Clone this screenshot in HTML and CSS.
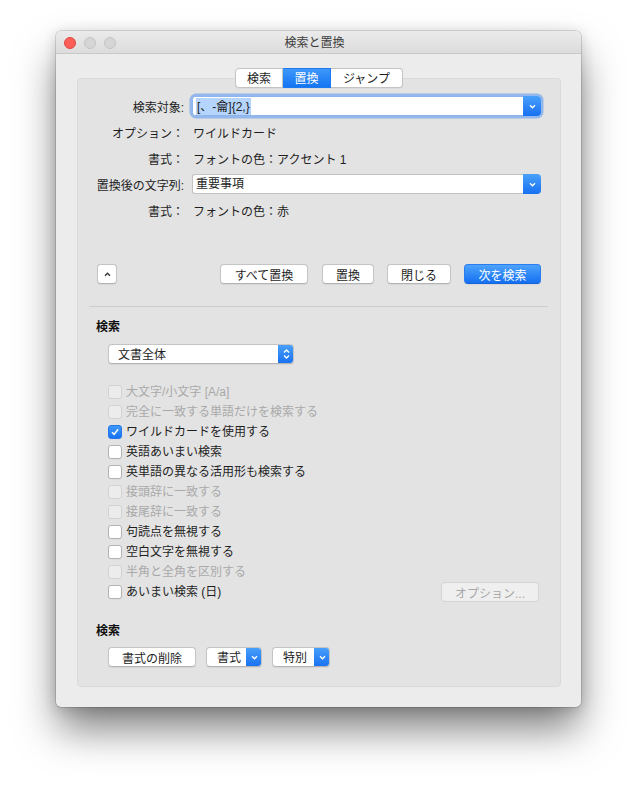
FILE: index.html
```html
<!DOCTYPE html>
<html lang="ja">
<head>
<meta charset="utf-8">
<title>検索と置換</title>
<link rel="stylesheet" href="styles.css">
</head>
<body>
<div class="window">
  <div class="titlebar">
    <div class="lights">
      <span class="light red"></span><span class="light grey"></span><span class="light grey"></span>
    </div>
    <div class="title">検索と置換</div>
  </div>
  <div class="content">
    <div class="tabs">
      <span class="tab">検索</span><span class="tab active">置換</span><span class="tab">ジャンプ</span>
    </div>
    <div class="group">
      <div class="form">
        <span class="lbl">検索対象:</span>
        <div class="combo focus">
          <div class="combo-field"><span class="selection">[、-龠]{2,}</span></div>
          <div class="combo-btn"><svg width="9" height="9" viewBox="0 0 9 9"><path d="M2 3.2 L4.5 5.7 L7 3.2" fill="none" stroke="#fff" stroke-width="1.4"/></svg></div>
        </div>
        <span class="lbl">オプション：</span><span class="val">ワイルドカード</span>
        <span class="lbl">書式：</span><span class="val">フォントの色：アクセント 1</span>
        <span class="lbl">置換後の文字列:</span>
        <div class="combo">
          <div class="combo-field">重要事項</div>
          <div class="combo-btn"><svg width="9" height="9" viewBox="0 0 9 9"><path d="M2 3.2 L4.5 5.7 L7 3.2" fill="none" stroke="#fff" stroke-width="1.4"/></svg></div>
        </div>
        <span class="lbl">書式：</span><span class="val">フォントの色：赤</span>
      </div>

      <div class="actions">
        <button class="btn small"><svg width="9" height="9" viewBox="0 0 9 9"><path d="M2 5.8 L4.5 3.3 L7 5.8" fill="none" stroke="#333" stroke-width="1.4"/></svg></button>
        <div class="action-buttons">
          <button class="btn w-all">すべて置換</button>
          <button class="btn w-rep">置換</button>
          <button class="btn w-close">閉じる</button>
          <button class="btn primary w-next">次を検索</button>
        </div>
      </div>

      <div class="separator"></div>

      <div class="section-title">検索</div>
      <div class="popup scope">
        <span class="popup-text">文書全体</span>
        <span class="stepper"><svg width="9" height="14" viewBox="0 0 9 14"><path d="M2 5.5 L4.5 3 L7 5.5 M2 8.5 L4.5 11 L7 8.5" fill="none" stroke="#fff" stroke-width="1.3"/></svg></span>
      </div>

      <ul class="checks">
        <li class="disabled"><span class="cb"></span>大文字/小文字 [A/a]</li>
        <li class="disabled"><span class="cb"></span>完全に一致する単語だけを検索する</li>
        <li><span class="cb checked"><svg width="14" height="14" viewBox="0 0 14 14"><path d="M3.5 7.2 L6 9.8 L10.6 3.8" fill="none" stroke="#fff" stroke-width="1.8"/></svg></span>ワイルドカードを使用する</li>
        <li><span class="cb"></span>英語あいまい検索</li>
        <li><span class="cb"></span>英単語の異なる活用形も検索する</li>
        <li class="disabled"><span class="cb"></span>接頭辞に一致する</li>
        <li class="disabled"><span class="cb"></span>接尾辞に一致する</li>
        <li><span class="cb"></span>句読点を無視する</li>
        <li><span class="cb"></span>空白文字を無視する</li>
        <li class="disabled"><span class="cb"></span>半角と全角を区別する</li>
        <li class="last"><span class="check-label"><span class="cb"></span>あいまい検索 (日)</span><button class="btn disabled-btn">オプション...</button></li>
      </ul>

      <div class="section-title second">検索</div>
      <div class="bottom-buttons">
        <button class="btn w-clear">書式の削除</button>
        <div class="popup blue-end w-fmt"><span class="popup-text">書式</span><span class="popup-arrow"><svg width="9" height="9" viewBox="0 0 9 9"><path d="M2 3.2 L4.5 5.7 L7 3.2" fill="none" stroke="#fff" stroke-width="1.4"/></svg></span></div>
        <div class="popup blue-end w-special"><span class="popup-text">特別</span><span class="popup-arrow"><svg width="9" height="9" viewBox="0 0 9 9"><path d="M2 3.2 L4.5 5.7 L7 3.2" fill="none" stroke="#fff" stroke-width="1.4"/></svg></span></div>
      </div>
    </div>
  </div>
</div>
</body>
</html>
```

FILE: styles.css
```css
* { box-sizing: border-box; }

html {
  height: 100%;
  margin: 0;
  background: #ffffff;
}

body {
  margin: 0;
  min-height: 100%;
  padding: 31px 0 0 56px;
  background: #ffffff;
  font-family: "Liberation Sans", "Noto Sans CJK JP", sans-serif;
  font-size: 12px;
  color: #1e1e1e;
}

.window {
  width: 525px;
  height: 676px;
  background: #ececec;
  border-radius: 5px;
  box-shadow: 0 0 0 0.5px rgba(0, 0, 0, 0.25), 0 2px 14px rgba(0, 0, 0, 0.16), 0 24px 40px -2px rgba(0, 0, 0, 0.5);
  overflow: hidden;
}

.titlebar {
  height: 23px;
  background: linear-gradient(#ebebeb, #dcdcdc);
  border-bottom: 1px solid #c9c9c9;
  display: flex;
  align-items: center;
}

.lights {
  display: flex;
  gap: 8px;
  padding-left: 8px;
  padding-top: 2px;
}

.light {
  width: 12px;
  height: 12px;
  border-radius: 50%;
  display: block;
}

.light.red {
  background: #fc5f57;
  border: 0.5px solid #df4744;
}

.light.grey {
  background: #d6d6d6;
  border: 0.5px solid #c3c3c3;
}

.title {
  flex: 1;
  text-align: center;
  margin-left: -68px;
  padding-top: 2px;
  color: #3d3d3d;
  font-size: 12px;
  line-height: 16px;
}

.content {
  padding: 14px 20px 20px 21px;
}

.tabs {
  display: flex;
  justify-content: center;
  position: relative;
  z-index: 1;
  height: 20px;
}

.tab {
  height: 20px;
  line-height: 16px;
  padding-top: 2px;
  background: #fff;
  border: 1px solid #c3c3c3;
  border-left: none;
  font-size: 12px;
  color: #1e1e1e;
  text-align: center;
  box-shadow: 0 0.5px 0 rgba(0, 0, 0, 0.08);
}

.tab:first-child {
  border-left: 1px solid #c3c3c3;
  border-radius: 4px 0 0 4px;
  width: 48px;
}

.tab.active {
  background: linear-gradient(#3f98fb, #1474f2);
  color: #fff;
  border-color: #1e78ef;
  width: 48px;
}

.tab:last-child {
  border-radius: 0 4px 4px 0;
  width: 72px;
}

.group {
  margin-top: -10px;
  background: #e3e3e3;
  border: 1px solid #dadada;
  border-radius: 4px;
  padding: 14px 0 19px 0;
}

.form {
  display: grid;
  grid-template-columns: 106px 1fr;
  column-gap: 8px;
  grid-auto-rows: 26px;
  align-items: center;
  padding-right: 19px;
}

.lbl, .val {
  line-height: 16px;
  padding-top: 4px;
  white-space: nowrap;
}

.lbl {
  text-align: right;
}

.val {
  padding-left: 1px;
}

.combo {
  display: flex;
  height: 20px;
  border-radius: 4px;
}

.combo.focus {
  box-shadow: 0 0 0 2.5px rgba(95, 155, 240, 0.6);
}

.combo-field {
  flex: 1;
  background: #fff;
  border: 1px solid #c2c2c2;
  border-right: none;
  border-radius: 3px 0 0 3px;
  padding: 1px 3px 0 3px;
  line-height: 17px;
  white-space: nowrap;
}

.combo.focus .combo-field {
  border-color: #8fb4ea;
  padding-top: 0;
}

.selection {
  background: #b5d5fc;
  display: inline-block;
  line-height: 16px;
  padding: 1px 1px 0 1px;
  margin-top: 1px;
}

.combo-btn {
  width: 18px;
  background: linear-gradient(#4aa1fb, #1770f1);
  border-radius: 0 4px 4px 0;
  display: flex;
  align-items: center;
  justify-content: center;
}

.combo-btn svg, .popup-arrow svg {
  display: block;
}

.actions {
  display: flex;
  justify-content: space-between;
  align-items: center;
  margin-top: 41px;
  padding: 0 19px 0 19px;
}

.action-buttons {
  display: flex;
  gap: 13px;
}

.btn {
  height: 20px;
  font-family: inherit;
  font-size: 12px;
  color: #1e1e1e;
  background: #fff;
  border: 1px solid #c4c4c4;
  border-bottom-color: #b3b3b3;
  border-radius: 4px;
  padding: 4px 0 0 0;
  line-height: 16px;
  box-shadow: 0 0.5px 1px rgba(0, 0, 0, 0.06);
  display: flex;
  align-items: center;
  justify-content: center;
}

.btn.small {
  width: 20px;
  padding: 0;
}

.btn.primary {
  background: linear-gradient(#4da3fb, #1570f1);
  border-color: #2a7df0;
  border-bottom-color: #1564db;
  color: #fff;
}

.w-all { width: 88px; }
.w-rep { width: 52px; margin-left: 1px; }
.w-close { width: 64px; }
.w-next { width: 77px; }

.separator {
  height: 1px;
  background: #cdcdcd;
  margin: 22px 12px 0 11px;
}

.section-title {
  font-weight: bold;
  line-height: 16px;
  padding-top: 2px;
  margin-top: 10px;
  padding-left: 18px;
  color: #111;
}

.section-title.second {
  margin-top: 19px;
}

.popup {
  display: flex;
  height: 20px;
  background: #fff;
  border: 1px solid #c4c4c4;
  border-bottom-color: #b3b3b3;
  border-radius: 4px;
  box-shadow: 0 0.5px 1px rgba(0, 0, 0, 0.06);
  overflow: hidden;
}

.popup.scope {
  margin-top: 9px;
  margin-left: 30px;
  width: 186px;
}

.popup-text {
  flex: 1;
  line-height: 16px;
  padding-top: 2px;
  padding-left: 9px;
}

.stepper, .popup-arrow {
  width: 16px;
  margin: -1px -1px -1px 0;
  background: linear-gradient(#4aa1fb, #1770f1);
  display: flex;
  align-items: center;
  justify-content: center;
}

.checks {
  list-style: none;
  margin: 18px 0 0 0;
  padding: 0 21px 0 30px;
}

.checks li {
  height: 20px;
  display: flex;
  align-items: center;
  line-height: 16px;
}

.checks li.disabled {
  color: #a9a9a9;
}

.check-label {
  display: flex;
  align-items: center;
}

.checks li.last {
  justify-content: space-between;
}

.cb {
  width: 14px;
  height: 14px;
  border: 1px solid #b3b3b3;
  border-radius: 3px;
  background: #fff;
  margin-right: 4px;
  flex: none;
  display: flex;
  align-items: center;
  justify-content: center;
  box-shadow: 0 0.5px 0.5px rgba(0, 0, 0, 0.05);
}

.disabled .cb {
  background: #ececec;
  border-color: #d2d2d2;
  box-shadow: none;
}

.cb.checked {
  background: linear-gradient(#3f98fb, #1672f1);
  border-color: #2477ec;
}

.cb svg {
  display: block;
}

.btn.disabled-btn {
  width: 98px;
  color: #a8a8a8;
  background: #efefef;
  border-color: #d4d4d4;
  box-shadow: none;
}

.bottom-buttons {
  display: flex;
  gap: 10px;
  margin-top: 8px;
  padding-left: 30px;
}

.w-clear { width: 88px; }
.w-fmt { width: 56px; }
.w-special { width: 58px; }

.blue-end .popup-text {
  padding-left: 10px;
}
```
